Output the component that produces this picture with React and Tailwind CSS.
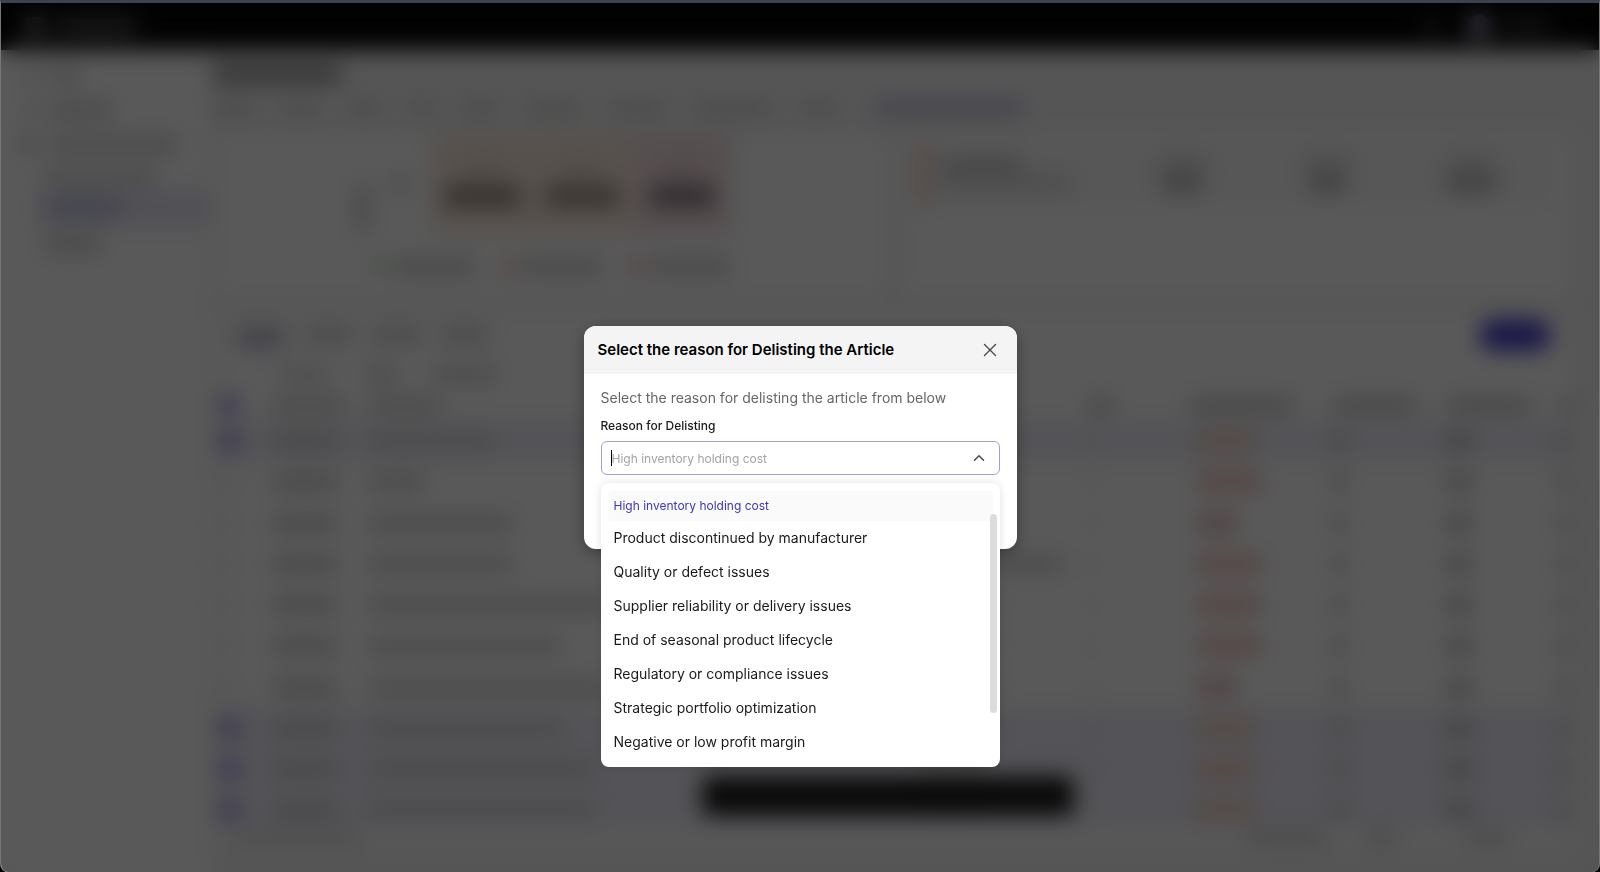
import React, { useState } from "react";
import { ChevronUp, X } from "lucide-react";

const REASONS = [
  "High inventory holding cost",
  "Product discontinued by manufacturer",
  "Quality or defect issues",
  "Supplier reliability or delivery issues",
  "End of seasonal product lifecycle",
  "Regulatory or compliance issues",
  "Strategic portfolio optimization",
  "Negative or low profit margin",
];

const NAV_TABS = ["w-10", "w-10", "w-8", "w-6", "w-9", "w-14", "w-14", "w-20", "w-9"];

const MATRIX = [
  { cell: "bg-[#f9e8dc]", value: "w-[76px] bg-[#92857c]" },
  { cell: "bg-[#f9e8dc]", value: "w-[72px] bg-[#978a81]" },
  { cell: "bg-[#f5dfe2]", value: "w-16 bg-[#85757e]" },
];

const LEGEND = ["bg-[#93cc88]", "bg-[#f08a72]", "bg-[#ee6e78]"];

const ROWS = [
  { selected: true, name: "w-[124px]", supplier: "w-16", badge: "w-14 bg-[#f3d0c0]" },
  { selected: false, name: "w-14", supplier: "w-16", badge: "w-16 bg-[#efc4be]" },
  { selected: false, name: "w-36", supplier: "w-20", badge: "w-10 bg-[#e8bcbc]" },
  { selected: false, name: "w-36", supplier: "w-36", badge: "w-16 bg-[#efc4be]" },
  { selected: false, name: "w-60", supplier: "w-20", badge: "w-16 bg-[#efc4be]" },
  { selected: false, name: "w-48", supplier: "w-20", badge: "w-16 bg-[#efc4be]" },
  { selected: false, name: "w-60", supplier: "w-20", badge: "w-10 bg-[#e8bcbc]" },
  { selected: true, name: "w-48", supplier: "w-20", badge: "w-14 bg-[#f3d0c0]" },
  { selected: true, name: "w-56", supplier: "w-16", badge: "w-14 bg-[#f3d0c0]" },
  { selected: true, name: "w-56", supplier: "w-16", badge: "w-14 bg-[#f3d0c0]" },
];

function Line({ className }) {
  return <div className={`h-4 rounded-sm ${className}`} />;
}

function Header() {
  return (
    <div className="flex h-[47px] shrink-0 items-center justify-between bg-[#050505] px-6">
      <div className="flex items-center gap-3">
        <div className="h-5 w-5 rounded bg-[#777]" />
        <Line className="w-20 bg-[#555]" />
      </div>
      <div className="flex items-center gap-7 pr-6">
        <div className="h-4 w-4 rounded-full bg-[#444]" />
        <div className="flex items-center gap-3">
          <div className="h-6 w-6 rounded-full bg-[#aaa7c8]" />
          <Line className="w-12 bg-[#333]" />
        </div>
      </div>
    </div>
  );
}

function Sidebar() {
  return (
    <div className="flex w-52 shrink-0 flex-col bg-white pt-2">
      <div className="flex h-9 items-center gap-3 pl-6">
        <Line className="w-3 bg-[#d4d4d4]" />
        <Line className="w-8 bg-[#d4d4d4]" />
      </div>
      <div className="flex h-8 items-center gap-3 px-6">
        <Line className="w-3 bg-[#d4d4d4]" />
        <Line className="w-16 bg-[#d0d0d0]" />
      </div>
      <div className="flex h-9 items-center gap-3 px-5">
        <Line className="w-4 bg-[#c8c8c8]" />
        <Line className="w-32 bg-[#d0d0d0]" />
      </div>
      <div className="flex h-7 items-center pl-11">
        <Line className="w-28 bg-[#d4d4d4]" />
      </div>
      <div className="ml-9 flex h-9 items-center rounded bg-[#e6e4f6] pl-3">
        <Line className="w-[72px] bg-[#b9bad8]" />
      </div>
      <div className="flex h-9 items-center pl-11">
        <Line className="w-14 bg-[#ccc]" />
      </div>
    </div>
  );
}

function ProfitCard() {
  return (
    <div className="flex flex-col items-center rounded-xl bg-white">
      <div className="flex items-center gap-6 pr-4">
        <div className="mt-12 h-12 w-3 rounded-sm bg-[#c8c8c8]" />
        <Line className="w-4 bg-[#ccc]" />
        <div className="flex">
          {MATRIX.map((item, index) => (
            <div key={index} className={`flex h-[100px] w-[100px] flex-col items-center justify-center gap-3 ${item.cell}`}>
              <div className="h-3 w-8 bg-black/10" />
              <div className={`h-5 rounded-sm ${item.value}`} />
            </div>
          ))}
        </div>
      </div>
      <div className="mt-6 flex gap-7">
        {LEGEND.map((color) => (
          <div key={color} className="flex items-center gap-2">
            <div className={`h-3 w-3 rounded-full ${color}`} />
            <Line className="w-20 bg-[#ccc]" />
          </div>
        ))}
      </div>
    </div>
  );
}

function SummaryCard() {
  return (
    <div className="rounded-xl bg-white px-4 pt-2">
      <div className="flex h-16 items-center bg-[#f8f8f8]">
        <div className="h-full w-3 bg-[#f3c8b8]" />
        <div className="ml-3 flex w-48 flex-col gap-1">
          <Line className="w-20 bg-[#c8c8c8]" />
          <Line className="w-32 bg-[#d8d8d8]" />
        </div>
        <div className="flex flex-1 justify-between pr-14 pl-5">
          {["w-10", "w-9", "w-12"].map((width) => (
            <div key={width} className="flex w-14 flex-col items-center gap-1">
              <Line className="w-12 bg-[#d8d8d8]" />
              <div className={`h-4 rounded-sm bg-[#b4b4b4] ${width}`} />
            </div>
          ))}
        </div>
      </div>
    </div>
  );
}

function ArticleTable() {
  return (
    <table className="w-full table-fixed">
      <colgroup>
        <col className="w-14" />
        <col className="w-24" />
        <col className="w-[550px]" />
        <col className="w-[170px]" />
        <col className="w-[100px]" />
        <col className="w-[144px]" />
        <col className="w-[114px]" />
        <col className="w-[108px]" />
        <col />
      </colgroup>
      <thead>
        <tr className="h-[30px]">
          <th className="pl-1"><div className="h-4 w-4 rounded bg-[#7a72dd]" /></th>
          <th><Line className="w-[72px] bg-[#d4d4d4]" /></th>
          <th><Line className="w-[72px] bg-[#d4d4d4]" /></th>
          <th><Line className="w-16 bg-[#d4d4d4]" /></th>
          <th><Line className="w-6 bg-[#c8c8c8]" /></th>
          <th><Line className="w-[104px] bg-[#ccc]" /></th>
          <th><Line className="w-[84px] bg-[#ccc]" /></th>
          <th><Line className="w-[84px] bg-[#ccc]" /></th>
          <th><Line className="w-6 bg-[#ddd]" /></th>
        </tr>
      </thead>
      <tbody>
        {ROWS.map((row, index) => (
          <tr key={index} className={`h-[41px] ${row.selected ? "bg-[#efedf8]" : ""}`}>
            <td className="pl-1">
              <div className={`h-4 w-4 rounded ${row.selected ? "bg-[#7a72dd]" : "border border-[#bbb]"}`} />
            </td>
            <td><Line className="w-16 bg-[#ccc]" /></td>
            <td><Line className={`bg-[#d2d2d2] ${row.name}`} /></td>
            <td><Line className={`bg-[#d4d4d4] ${row.supplier}`} /></td>
            <td><Line className="w-1 bg-[#ddd]" /></td>
            <td><div className={`ml-2 h-5 rounded-sm ${row.badge}`} /></td>
            <td><Line className="w-3 bg-[#bcbcbc]" /></td>
            <td><Line className="w-6 bg-[#b8b8b8]" /></td>
            <td><Line className="w-4 bg-[#d0d0d0]" /></td>
          </tr>
        ))}
      </tbody>
    </table>
  );
}

function Dashboard() {
  return (
    <div className="flex h-full flex-col bg-[#f4f4f4]" aria-hidden="true">
      <Header />
      <div className="flex min-h-0 flex-1">
        <Sidebar />
        <div className="min-w-0 flex-1 pt-4">
          <div className="ml-1 h-4 w-32 rounded-sm bg-[#888]" />
          <div className="mt-3 ml-1 flex h-7 items-center gap-7">
            {NAV_TABS.map((width, index) => (
              <Line key={index} className={`bg-[#d8d8d8] ${width}`} />
            ))}
            <div className="flex h-7 items-center rounded bg-[#edecf5] px-3">
              <Line className="w-36 bg-[#c8c6dc]" />
            </div>
          </div>
          <div className="mt-3 grid h-[162px] grid-cols-2 gap-4 pr-7 pl-2">
            <ProfitCard />
            <SummaryCard />
          </div>
          <div className="mt-4 mr-7 ml-2 rounded-xl bg-white">
            <div className="flex h-[46px] items-center justify-between px-5">
              <div className="flex items-center gap-5">
                <div className="border-b-8 border-[#dad7f5] pt-2"><Line className="w-12 bg-[#bbb5c0]" /></div>
                <Line className="w-12 bg-[#d0d0d0]" />
                <Line className="w-12 bg-[#d0d0d0]" />
                <Line className="w-12 bg-[#d0d0d0]" />
              </div>
              <div className="h-8 w-[72px] rounded-full bg-[#4a41cc]" />
            </div>
            <div className="flex h-8 items-center gap-9 pl-16">
              <Line className="w-12 bg-[#dcdcdc]" />
              <Line className="w-8 bg-[#d4d4d4]" />
              <Line className="w-16 bg-[#d4d4d4]" />
            </div>
            <ArticleTable />
            <div className="flex h-4 items-center justify-between pr-16 pl-4">
              <Line className="w-32 bg-[#e4e4e4]" />
              <div className="flex gap-10">
                <Line className="w-20 bg-[#dcdcdc]" />
                <Line className="w-7 bg-[#dcdcdc]" />
                <Line className="ml-8 w-10 bg-[#dcdcdc]" />
              </div>
            </div>
          </div>
        </div>
      </div>
    </div>
  );
}

function ReasonSelect() {
  const [selected, setSelected] = useState(REASONS[0]);
  const [open, setOpen] = useState(true);

  return (
    <div className="relative">
      <label htmlFor="reason" className="block text-xs leading-4 font-medium text-[#1a1a1a]">
        Reason for Delisting
      </label>
      <div className="relative mt-[7px]">
        <input
          id="reason"
          role="combobox"
          aria-expanded={open}
          aria-controls="reason-list"
          placeholder={selected}
          className="block h-[34px] w-full rounded-md border border-[#a29fd0] bg-white px-[10px] text-xs text-black outline-none placeholder:text-[#a3a3a3]"
        />
        <span className="absolute top-[9px] left-[10px] h-4 w-px bg-black" />
        <button
          type="button"
          aria-label="Toggle reasons"
          onClick={() => setOpen(!open)}
          className="absolute top-2 right-3 text-[#4a4a4a]"
        >
          <ChevronUp size={18} strokeWidth={2} />
        </button>
      </div>
      {open && (
        <div className="absolute top-full right-0 left-0 mt-2 rounded-lg bg-white px-[7px] py-2 shadow-[0_0_10px_rgba(0,0,0,0.12)]">
          <ul id="reason-list" role="listbox" aria-label="Reason for Delisting">
            {REASONS.map((reason) => (
              <li
                key={reason}
                role="option"
                aria-selected={reason === selected}
                onClick={() => setSelected(reason)}
                className={`flex cursor-pointer items-center rounded px-[6px] ${
                  reason === selected ? "h-[30px] bg-[#fafafa] text-xs text-[#3f37b0]" : "h-[34px] text-sm text-[#1a1a1a]"
                }`}
              >
                {reason}
              </li>
            ))}
          </ul>
          <div className="absolute top-[31px] right-[3px] h-[199px] w-[7px] rounded-full bg-[#dcdcdc]" />
        </div>
      )}
    </div>
  );
}

function DelistModal() {
  return (
    <div role="dialog" aria-labelledby="delist-title" className="h-[223px] w-[433px] rounded-xl bg-white shadow-[0_4px_16px_rgba(0,0,0,0.35)]">
      <div className="flex h-12 items-center justify-between rounded-t-xl bg-[#f4f4f4] pr-4 pl-[14px]">
        <h2 id="delist-title" className="text-[15px] font-semibold text-black">
          Select the reason for Delisting the Article
        </h2>
        <button type="button" aria-label="Close" className="text-[#4a4a4a]">
          <X size={22} strokeWidth={1.5} />
        </button>
      </div>
      <div className="px-[17px] pt-[14px]">
        <p className="mb-[10px] text-sm leading-5 text-[#666]">Select the reason for delisting the article from below</p>
        <ReasonSelect />
      </div>
    </div>
  );
}

export default function App() {
  return (
    <div className="h-screen overflow-hidden bg-black font-['Inter',sans-serif]">
      <div className="relative h-full overflow-hidden rounded-b-lg border-x border-t-3 border-x-[#777] border-t-[#3a4250]">
        <Dashboard />
        <div className="absolute inset-x-0 bottom-14 flex justify-center pl-44">
          <div className="h-10 w-[372px] rounded-lg bg-[#1c1c1c]" />
        </div>
        <div className="absolute inset-0 flex items-center justify-center bg-black/65 backdrop-blur-[11px]">
          <DelistModal />
        </div>
      </div>
    </div>
  );
}
